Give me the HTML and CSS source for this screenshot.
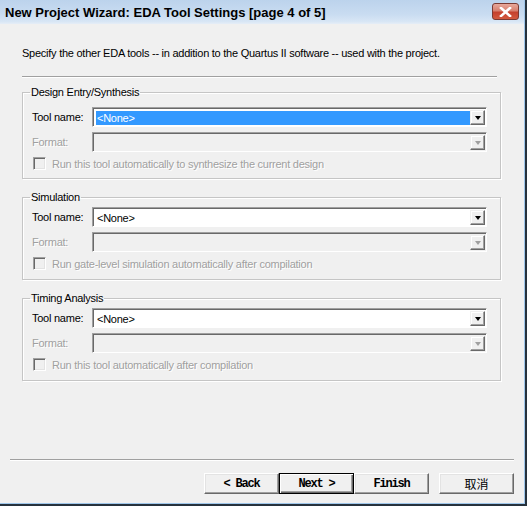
FILE: index.html
```html
<!DOCTYPE html>
<html>
<head>
<meta charset="utf-8">
<link rel="stylesheet" href="styles.css">
</head>
<body>
<div class="window">
  <div class="frame">
    <div class="titlebar">
      <span class="title">New Project Wizard: EDA Tool Settings [page 4 of 5]</span>
      <span class="close"><svg width="13" height="10" viewBox="0 0 13 10"><path d="M2 1 L11 9 M11 1 L2 9" stroke="#fff" stroke-width="2.6" stroke-linecap="square"/></svg></span>
    </div>
    <div class="content">
      <div class="main">
        <p class="intro">Specify the other EDA tools -- in addition to the Quartus II software -- used with the project.</p>
        <div class="sep sep-top"></div>

        <fieldset class="group group-first">
          <legend>Design Entry/Synthesis</legend>
          <div class="row">
            <span class="label">Tool name:</span>
            <div class="combo">
              <div class="field"><span class="selected">&lt;None&gt;</span></div>
              <span class="arrow"><i class="tri"></i></span>
            </div>
          </div>
          <div class="row">
            <span class="label disabled">Format:</span>
            <div class="combo off">
              <div class="field"></div>
              <span class="arrow"><i class="tri"></i></span>
            </div>
          </div>
          <div class="check disabled"><span class="box"></span><span>Run this tool automatically to synthesize the current design</span></div>
        </fieldset>

        <fieldset class="group">
          <legend>Simulation</legend>
          <div class="row">
            <span class="label">Tool name:</span>
            <div class="combo">
              <div class="field"><span class="value">&lt;None&gt;</span></div>
              <span class="arrow"><i class="tri"></i></span>
            </div>
          </div>
          <div class="row">
            <span class="label disabled">Format:</span>
            <div class="combo off">
              <div class="field"></div>
              <span class="arrow"><i class="tri"></i></span>
            </div>
          </div>
          <div class="check disabled"><span class="box"></span><span>Run gate-level simulation automatically after compilation</span></div>
        </fieldset>

        <fieldset class="group">
          <legend>Timing Analysis</legend>
          <div class="row">
            <span class="label">Tool name:</span>
            <div class="combo">
              <div class="field"><span class="value">&lt;None&gt;</span></div>
              <span class="arrow"><i class="tri"></i></span>
            </div>
          </div>
          <div class="row">
            <span class="label disabled">Format:</span>
            <div class="combo off">
              <div class="field"></div>
              <span class="arrow"><i class="tri"></i></span>
            </div>
          </div>
          <div class="check disabled"><span class="box"></span><span>Run this tool automatically after compilation</span></div>
        </fieldset>
      </div>
      <div class="footer">
        <div class="sep sep-bottom"></div>
        <div class="buttons">
          <button class="btn">&lt; Back</button>
          <button class="btn default">Next &gt;</button>
          <button class="btn">Finish</button>
          <button class="btn cancel">取消</button>
        </div>
      </div>
    </div>
  </div>
</div>
</body>
</html>
```
FILE: styles.css
```css
html, body {
  margin: 0;
  padding: 0;
  background: #ffffff;
}
body {
  font-family: "Liberation Sans", Arial, sans-serif;
  font-size: 11px;
  letter-spacing: -0.25px;
  color: #000;
}
.window {
  width: 527px;
  height: 506px;
  box-sizing: border-box;
  border-right: 2px solid #26323d;
  border-bottom: 2px solid #26323d;
}
.frame {
  height: 100%;
  box-sizing: border-box;
  border-right: 1px solid #9fc6ea;
  border-bottom: 1px solid #9fc6ea;
  background: #f0f0f0;
  display: flex;
  flex-direction: column;
}
.titlebar {
  height: 24px;
  flex: none;
  display: flex;
  align-items: center;
  justify-content: space-between;
  padding: 0 5px 0 5px;
  background: linear-gradient(#bcd3ec 0%, #c9dcf1 60%, #d8e6f5 90%, #e6eef7 100%);
}
.title {
  font-weight: bold;
  font-size: 13px;
  letter-spacing: 0;
  color: #000;
  margin-top: 1px;
}
.close {
  width: 27px;
  height: 17px;
  box-sizing: border-box;
  border: 1px solid #7a3a33;
  border-radius: 3px;
  background: linear-gradient(#e8a89b 0%, #d7806f 45%, #c4412e 55%, #d3593f 100%);
  display: flex;
  align-items: center;
  justify-content: center;
  margin-top: -1px;
}
.content {
  flex: 1;
  display: flex;
  flex-direction: column;
}
.main {
  flex: 1;
  padding: 0 23px 0 22px;
}
.intro {
  margin: 22px 0 0 0;
  line-height: 14px;
}
.sep {
  height: 1px;
  background: #a0a0a0;
  border-bottom: 1px solid #ffffff;
}
.sep-top {
  margin: 16px 4px 0 0;
}
.group {
  margin: 8px 0 0 0;
  padding: 3px 0 9px 9px;
  border: 1px solid #c5c5c5;
  box-shadow: inset 1px 1px 0 #fff, 1px 1px 0 #fff;
  min-width: 0;
}
.group + .group {
  margin-top: 12px;
}
.group-first {
  padding-top: 8px;
  padding-bottom: 8px;
}
.group legend {
  padding: 0 1px;
  margin-left: -2px;
  line-height: 13px;
}
.row {
  display: flex;
  align-items: center;
  height: 20px;
  margin-bottom: 5px;
}
.label {
  width: 60px;
  flex: none;
}
.disabled, .disabled span {
  color: #a0a0a0;
  text-shadow: 1px 1px 0 #fff;
}
.combo {
  width: 395px;
  height: 20px;
  box-sizing: border-box;
  border: 1px solid;
  border-color: #a0a0a0 #fff #fff #a0a0a0;
  display: flex;
}
.field {
  flex: 1;
  height: 100%;
  box-sizing: border-box;
  border-top: 1px solid #696969;
  border-left: 1px solid #696969;
  background: #fff;
  padding: 1px 0 1px 2px;
  display: flex;
  align-items: center;
}
.combo.off .field {
  background: #f0f0f0;
}
.selected {
  display: block;
  width: 100%;
  height: 14px;
  line-height: 14px;
  background: #3399ff;
  color: #fff;
  padding-left: 1px;
}
.value {
  padding-left: 1px;
}
.arrow {
  width: 16px;
  height: 100%;
  box-sizing: border-box;
  border-top: 1px solid #696969;
  background: #fff;
  display: flex;
}
.tri {
  flex: 1;
  margin: 1px 1px 1px 0;
  box-sizing: border-box;
  border: 1px solid;
  border-color: #f0f0f0 #696969 #696969 #f0f0f0;
  box-shadow: inset -1px -1px 0 #a0a0a0, inset 1px 1px 0 #fff;
  background: #f0f0f0;
  display: flex;
  align-items: center;
  justify-content: center;
}
.tri::after {
  content: "";
  width: 0;
  height: 0;
  border-left: 3.5px solid transparent;
  border-right: 3.5px solid transparent;
  border-top: 4px solid #000;
}
.combo.off .arrow {
  background: #f0f0f0;
}
.combo.off .tri::after {
  border-top-color: #a0a0a0;
}
.check {
  display: flex;
  align-items: center;
  gap: 6px;
  margin-left: 1px;
  height: 13px;
}
.box {
  width: 13px;
  height: 13px;
  box-sizing: border-box;
  border: 1px solid;
  border-color: #a0a0a0 #fff #fff #a0a0a0;
  box-shadow: inset 1px 1px 0 #696969, inset -1px -1px 0 #e3e3e3;
  background: #f0f0f0;
  flex: none;
}
.footer {
  flex: none;
}
.sep-bottom {
  margin: 0 10px 0 10px;
}
.buttons {
  display: flex;
  justify-content: flex-end;
  padding: 12px 10px 9px 0;
}
.btn {
  width: 75px;
  height: 21px;
  box-sizing: border-box;
  margin: 0;
  padding: 0;
  font-family: "Liberation Mono", monospace;
  font-weight: bold;
  font-size: 12px;
  letter-spacing: -1.2px;
  background: #f0f0f0;
  color: #000;
  border: 1px solid;
  border-color: #fff #696969 #696969 #fff;
  box-shadow: inset -1px -1px 0 #a0a0a0, inset 1px 1px 0 #e3e3e3;
}
.btn.default {
  border: 1px solid #000;
  box-shadow: inset 1px 1px 0 #fff, inset -1px -1px 0 #696969, inset -2px -2px 0 #a0a0a0;
}
.btn.cancel {
  margin-left: 10px;
  font-family: "Noto Sans CJK SC", sans-serif;
  font-weight: normal;
  font-size: 12px;
  letter-spacing: 0;
}
```
